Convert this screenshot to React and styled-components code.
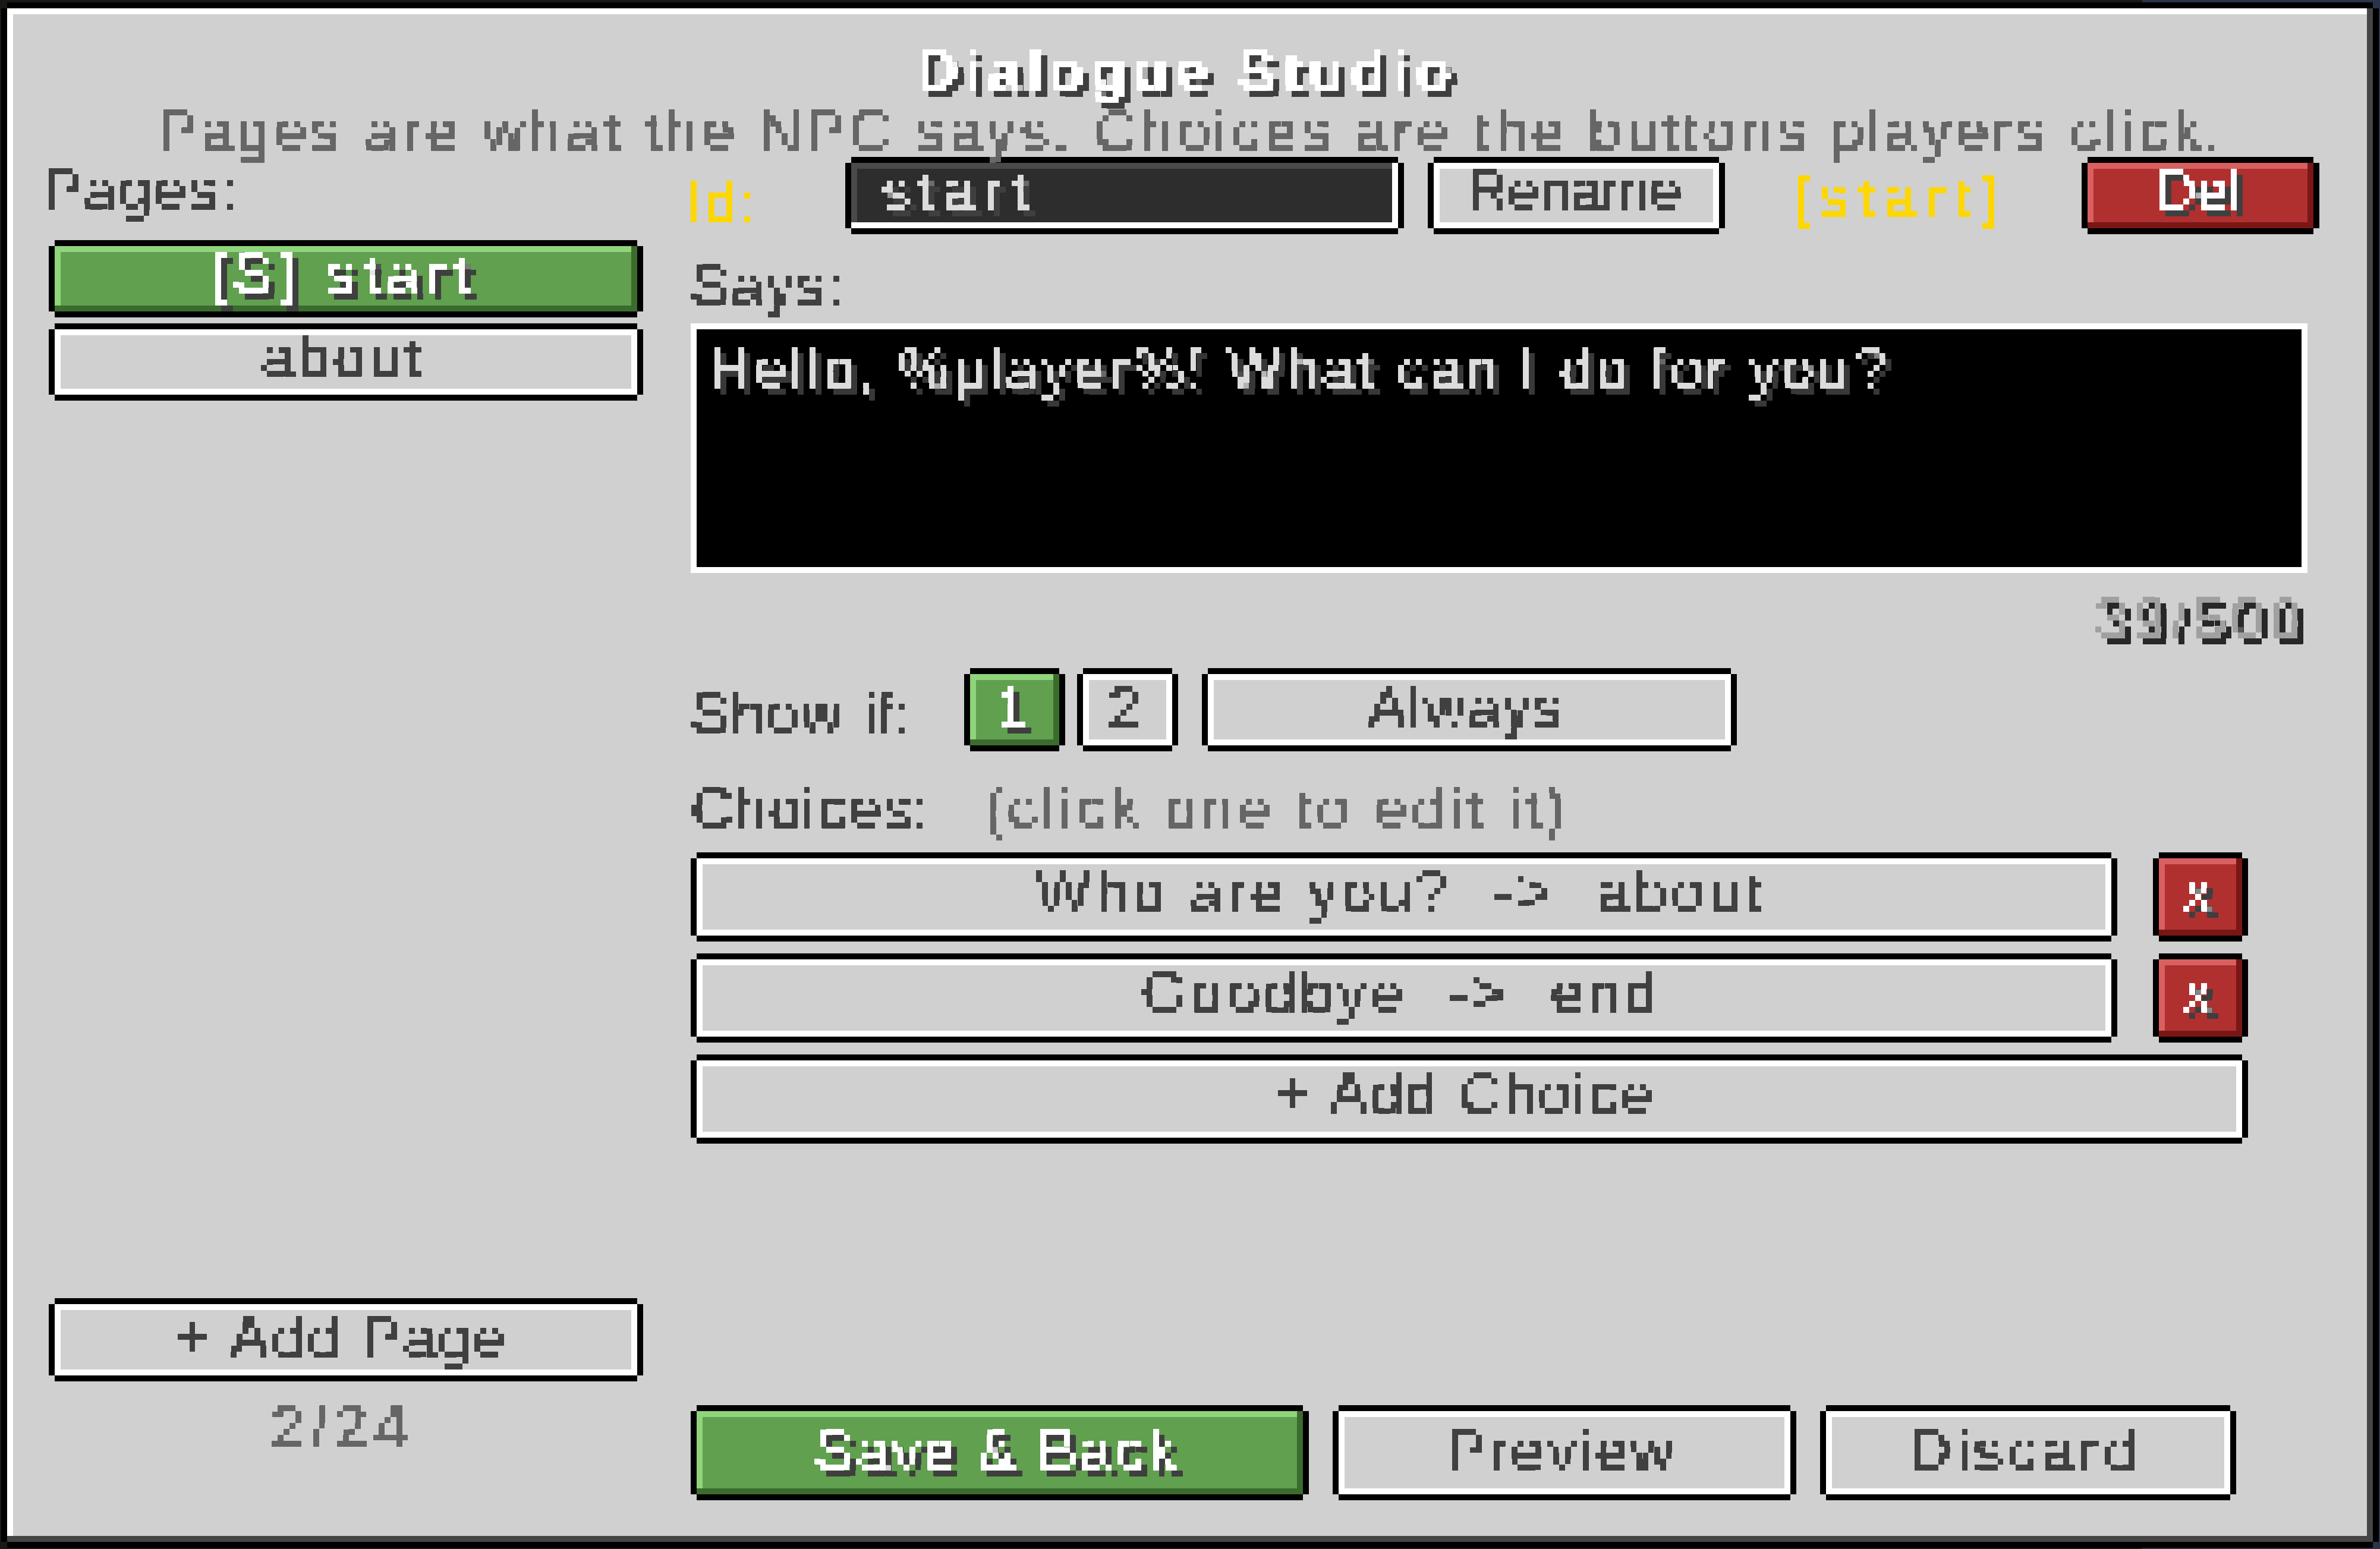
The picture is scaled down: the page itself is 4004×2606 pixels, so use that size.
import React from 'react';
import styled, { createGlobalStyle } from 'styled-components';

const GlobalStyle = createGlobalStyle`
  html, body {
    margin: 0;
    background: #171a16;
  }
`;

const Page = styled.div`
  width: 4004px;
  height: 2606px;
  padding: 14px 12px 0;
  box-sizing: border-box;
  overflow: hidden;
  background: linear-gradient(90deg, #171a14 0 90%, #2a3348 90% 100%);
`;

const Panel = styled.main`
  width: 3980px;
  height: 2580px;
  padding: 10px;
  box-sizing: border-box;
  display: flex;
  flex-direction: column;
  align-items: stretch;
  background: #d0d0d0;
  box-shadow:
    inset -10px -10px 0 #454545,
    inset 10px 10px 0 #fff,
    0 -10px 0 #000,
    0 10px 0 #000,
    -10px 0 0 #000,
    10px 0 0 #000;
`;

/* Box sits 10px out from the cap height so descenders and shadows stay inside the filter area */
const Txt = styled.span`
  display: block;
  width: fit-content;
  box-sizing: border-box;
  padding: 0 20px 18px 0;
  margin: -10px -20px -30px -10px;
  font-family: "Liberation Sans", Arial, sans-serif;
  font-size: 98px;
  font-weight: ${(p) => (p.$bold ? 700 : 400)};
  line-height: 92px;
  letter-spacing: ${(p) => p.$ls || 0}px;
  white-space: pre;
  color: ${(p) => p.$c || '#404040'};
  text-shadow: ${(p) => (p.$shadow ? `10px 10px 0 ${p.$shadow}` : 'none')};
  filter: url(#mc-pixel);
`;

const Subtitle = styled(Txt)`
  margin-left: 6px;
`;

const Header = styled.header`
  display: flex;
  flex-direction: column;
  align-items: center;
  gap: 31px;
  padding-top: 59px;
`;

const Columns = styled.div`
  flex: 1;
  display: flex;
`;

const LeftCol = styled.section`
  width: 1000px;
  margin-left: 60px;
  padding: 29px 0 150px;
  box-sizing: border-box;
  display: flex;
  flex-direction: column;
`;

const PageList = styled.div`
  margin: 61px 10px 0;
  display: flex;
  flex-direction: column;
  gap: 30px;
`;

const AddPageWrap = styled.div`
  margin: auto 10px 0;
  display: flex;
  flex-direction: column;
  align-items: center;
  gap: 50px;
`;

const RightCol = styled.section`
  width: 2730px;
  margin-left: 80px;
  padding-top: 20px;
  padding-bottom: 70px;
  box-sizing: border-box;
  display: flex;
  flex-direction: column;
`;

const themes = {
  gray: { bg: '#d0d0d0', light: '#fff', dark: '#fff' },
  green: { bg: '#60a04f', light: '#90d47c', dark: '#3b6b2d' },
  red: { bg: '#b03030', light: '#d96060', dark: '#7a1616' },
};

const Btn = styled.button`
  flex: none;
  width: ${(p) => (p.$w ? `${p.$w}px` : 'auto')};
  height: ${(p) => p.$h}px;
  margin-left: ${(p) => p.$ml || 0}px;
  padding: 0 0 ${(p) => (p.$h % 20 === 0 ? 10 : 20)}px;
  border: 0;
  display: flex;
  align-items: center;
  justify-content: center;
  background: ${(p) => themes[p.$tone || 'gray'].bg};
  box-shadow:
    inset -10px -10px 0 ${(p) => themes[p.$tone || 'gray'].dark},
    inset 10px 10px 0 ${(p) => themes[p.$tone || 'gray'].light},
    0 -10px 0 #000,
    0 10px 0 #000,
    -10px 0 0 #000,
    10px 0 0 #000;
`;

const IdRow = styled.div`
  height: 110px;
  display: flex;
`;

const IdLabel = styled.div`
  width: 270px;
  padding-top: 30px;
`;

const IdField = styled.div`
  width: 920px;
  height: 110px;
  padding: 10px 0 0 60px;
  box-sizing: border-box;
  background: #2d2d2d;
  box-shadow:
    inset -10px -10px 0 #fff,
    inset 10px 10px 0 #4a4a4a,
    0 -10px 0 #000,
    0 10px 0 #000,
    -10px 0 0 #000,
    10px 0 0 #000;
`;

const IdTag = styled.div`
  flex: 1;
  padding-top: 21px;
  display: flex;
  justify-content: center;
`;

const SaysLabel = styled.div`
  margin-top: 60px;
  padding-left: 10px;
`;

const SaysBox = styled.div`
  width: 2720px;
  height: 420px;
  margin-top: 30px;
  padding: 30px;
  box-sizing: border-box;
  border: 10px solid #fff;
  background: #000;
`;

const Counter = styled.div`
  width: 2720px;
  margin-top: 40px;
  display: flex;
  justify-content: flex-end;
`;

const ShowRow = styled.div`
  margin-top: 60px;
  display: flex;
`;

const ShowLabel = styled.div`
  width: 470px;
  padding: 30px 0 0 10px;
  box-sizing: border-box;
`;

const ChoicesHead = styled.div`
  margin-top: 70px;
  display: flex;
`;

const ChoicesLabel = styled.div`
  width: 504px;
  padding-left: 10px;
  box-sizing: border-box;
`;

const ChoiceList = styled.div`
  margin: 50px 0 0 10px;
  display: flex;
  flex-direction: column;
  gap: 40px;
`;

const ChoiceRow = styled.div`
  display: flex;
  gap: 80px;
`;

const Actions = styled.div`
  margin: auto 0 0 10px;
  display: flex;
  gap: 60px;
`;

const FilterDefs = styled.svg`
  position: absolute;
  width: 0;
  height: 0;
`;

const choices = [
  { text: 'Who are you?  ->  about', ls: 7.6 },
  { text: 'Goodbye  ->  end', ls: 7.2 },
];

export default function App() {
  return (
    <>
      <GlobalStyle />
      <FilterDefs aria-hidden="true">
        <filter id="mc-pixel" x="0" y="0" width="100%" height="100%" colorInterpolationFilters="sRGB">
          <feFlood x="4" y="4" width="2" height="2" floodColor="#000" />
          <feComposite width="10" height="10" />
          <feTile result="grid" />
          <feComposite in="SourceGraphic" in2="grid" operator="in" />
          <feMorphology operator="dilate" radius="4" />
          <feComponentTransfer>
            <feFuncA type="discrete" tableValues="0 1 1 1" />
          </feComponentTransfer>
        </filter>
      </FilterDefs>
      <Page>
        <Panel>
          <Header>
            <Txt $bold $ls={11} $c="#fff" $shadow="#3f3f3f">Dialogue Studio</Txt>
            <Subtitle $ls={7.4} $c="#666">Pages are what the NPC says. Choices are the buttons players click.</Subtitle>
          </Header>
          <Columns>
            <LeftCol>
              <Txt $ls={4}>Pages:</Txt>
              <PageList>
                <Btn $h={110} $tone="green">
                  <Txt $ls={12.5} $c="#fff" $shadow="#3f3f3f">[S] start</Txt>
                </Btn>
                <Btn $h={110}>
                  <Txt $ls={6}>about</Txt>
                </Btn>
              </PageList>
              <AddPageWrap>
                <Btn $w={980} $h={120}>
                  <Txt $ls={4.8}>+ Add Page</Txt>
                </Btn>
                <Txt $ls={12.5} $c="#666">2/24</Txt>
              </AddPageWrap>
            </LeftCol>
            <RightCol>
              <IdRow>
                <IdLabel>
                  <Txt $ls={7} $c="#ffd700">Id:</Txt>
                </IdLabel>
                <IdField>
                  <Txt $ls={14} $c="#dcdcdc" $shadow="#3f3f3f">start</Txt>
                </IdField>
                <Btn $w={480} $h={110} $ml={60}>
                  <Txt $ls={-2}>Rename</Txt>
                </Btn>
                <IdTag>
                  <Txt $ls={17} $c="#ffd700">[start]</Txt>
                </IdTag>
                <Btn $w={380} $h={110} $tone="red">
                  <Txt $c="#fff" $shadow="#3f3f3f">Del</Txt>
                </Btn>
              </IdRow>
              <SaysLabel>
                <Txt $ls={3}>Says:</Txt>
              </SaysLabel>
              <SaysBox>
                <Txt $ls={5.8} $c="#dcdcdc" $shadow="#383838">Hello, %player%! What can I do for you?</Txt>
              </SaysBox>
              <Counter>
                <Txt $ls={9.5} $c="#a0a0a0" $shadow="#282828">39/500</Txt>
              </Counter>
              <ShowRow>
                <ShowLabel>
                  <Txt $ls={3.5}>Show if:</Txt>
                </ShowLabel>
                <Btn $w={150} $h={120} $tone="green">
                  <Txt $c="#fff" $shadow="#3f3f3f">1</Txt>
                </Btn>
                <Btn $w={150} $h={120} $ml={40}>
                  <Txt>2</Txt>
                </Btn>
                <Btn $w={880} $h={120} $ml={60}>
                  <Txt $ls={3.4}>Always</Txt>
                </Btn>
              </ShowRow>
              <ChoicesHead>
                <ChoicesLabel>
                  <Txt $ls={3}>Choices:</Txt>
                </ChoicesLabel>
                <Txt $ls={7.6} $c="#666">(click one to edit it)</Txt>
              </ChoicesHead>
              <ChoiceList>
                {choices.map((c) => (
                  <ChoiceRow key={c.text}>
                    <Btn $w={2380} $h={130}>
                      <Txt $ls={c.ls}>{c.text}</Txt>
                    </Btn>
                    <Btn $w={140} $h={130} $tone="red">
                      <Txt $c="#fff" $shadow="#3f3f3f">x</Txt>
                    </Btn>
                  </ChoiceRow>
                ))}
                <Btn $w={2600} $h={130}>
                  <Txt $ls={4.2}>+ Add Choice</Txt>
                </Btn>
              </ChoiceList>
              <Actions>
                <Btn $w={1020} $h={140} $tone="green">
                  <Txt $ls={4.8} $c="#fff" $shadow="#3f3f3f">Save &amp; Back</Txt>
                </Btn>
                <Btn $w={760} $h={140}>
                  <Txt $ls={5.5}>Preview</Txt>
                </Btn>
                <Btn $w={680} $h={140}>
                  <Txt $ls={8.6}>Discard</Txt>
                </Btn>
              </Actions>
            </RightCol>
          </Columns>
        </Panel>
      </Page>
    </>
  );
}
